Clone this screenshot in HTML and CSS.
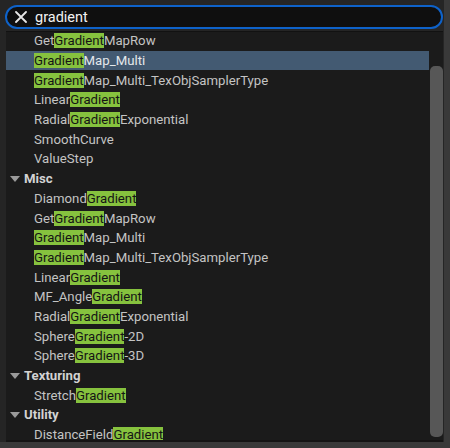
FILE: index.html
```html
<!DOCTYPE html>
<html>
<head>
<meta charset="utf-8">
<link rel="stylesheet" href="styles.css">
</head>
<body>
<div class="frame">
  <div class="search">
    <svg class="clear" width="12" height="12" viewBox="0 0 12 12"><path d="M1 1 L11 11 M11 1 L1 11" stroke="#e6e6e6" stroke-width="1.8" stroke-linecap="round"/></svg>
    <span class="query">gradient</span>
  </div>
  <div class="panel">
    <div class="list">
      <div class="row item">Get<span class="hl">Gradient</span>MapRow</div>
      <div class="row item selected"><span class="hl">Gradient</span>Map_Multi</div>
      <div class="row item"><span class="hl">Gradient</span>Map_Multi_TexObjSamplerType</div>
      <div class="row item">Linear<span class="hl">Gradient</span></div>
      <div class="row item">Radial<span class="hl">Gradient</span>Exponential</div>
      <div class="row item">SmoothCurve</div>
      <div class="row item">ValueStep</div>
      <div class="row cat"><span class="tri"></span>Misc</div>
      <div class="row item">Diamond<span class="hl">Gradient</span></div>
      <div class="row item">Get<span class="hl">Gradient</span>MapRow</div>
      <div class="row item"><span class="hl">Gradient</span>Map_Multi</div>
      <div class="row item"><span class="hl">Gradient</span>Map_Multi_TexObjSamplerType</div>
      <div class="row item">Linear<span class="hl">Gradient</span></div>
      <div class="row item">MF_Angle<span class="hl">Gradient</span></div>
      <div class="row item">Radial<span class="hl">Gradient</span>Exponential</div>
      <div class="row item">Sphere<span class="hl">Gradient</span>-2D</div>
      <div class="row item">Sphere<span class="hl">Gradient</span>-3D</div>
      <div class="row cat"><span class="tri"></span>Texturing</div>
      <div class="row item">Stretch<span class="hl">Gradient</span></div>
      <div class="row cat"><span class="tri"></span>Utility</div>
      <div class="row item">DistanceField<span class="hl">Gradient</span></div>
    </div>
    <div class="scroll"><div class="thumb"></div></div>
  </div>
</div>
</body>
</html>
```
FILE: styles.css
```css
html, body {
  margin: 0;
  padding: 0;
}
body {
  width: 450px;
  height: 448px;
  background: #393939;
  font-family: Roboto, "Noto Sans", sans-serif;
  overflow: hidden;
}
.frame {
  width: 444px;
  height: 442px;
  background: #252525;
  display: flex;
  flex-direction: column;
}
.search {
  margin: 5px 1px 0 5px;
  height: 20px;
  border: 2px solid #0e62c9;
  border-radius: 12px;
  background: #0f0f0f;
  display: flex;
  align-items: center;
}
.clear {
  margin-left: 8px;
  margin-right: 8px;
}
.query {
  color: #f2f2f2;
  font-size: 14.5px;
}
.panel {
  margin: 2px 1px 0 6px;
  flex: 1;
  background: #1b1b1b;
  border-top: 1px solid #121212;
  border-bottom: 2px solid #141414;
  display: flex;
  overflow: hidden;
}
.list {
  flex: 1;
  display: flex;
  flex-direction: column;
  margin-top: -1px;
}
.row {
  height: 19.7px;
  flex: none;
  display: flex;
  align-items: center;
  font-size: 13.2px;
  color: #c4c4c4;
  white-space: nowrap;
}
.item {
  padding-left: 28px;
}
.selected {
  background: #435a72;
  color: #e4e8ec;
}
.hl {
  background: #86c23e;
  color: #151515;
  line-height: 15px;
}
.cat {
  padding-left: 4px;
  font-weight: bold;
  color: #d2d2d2;
}
.tri {
  width: 0;
  height: 0;
  border-left: 5px solid transparent;
  border-right: 5px solid transparent;
  border-top: 6px solid #9a9a9a;
  margin-right: 4px;
}
.scroll {
  width: 13px;
  flex: none;
  display: flex;
  justify-content: flex-start;
  padding-left: 1px;
}
.thumb {
  width: 9px;
  margin-top: 34px;
  margin-bottom: 3px;
  flex: 1;
  background: #575757;
  border-radius: 5px;
}
```
